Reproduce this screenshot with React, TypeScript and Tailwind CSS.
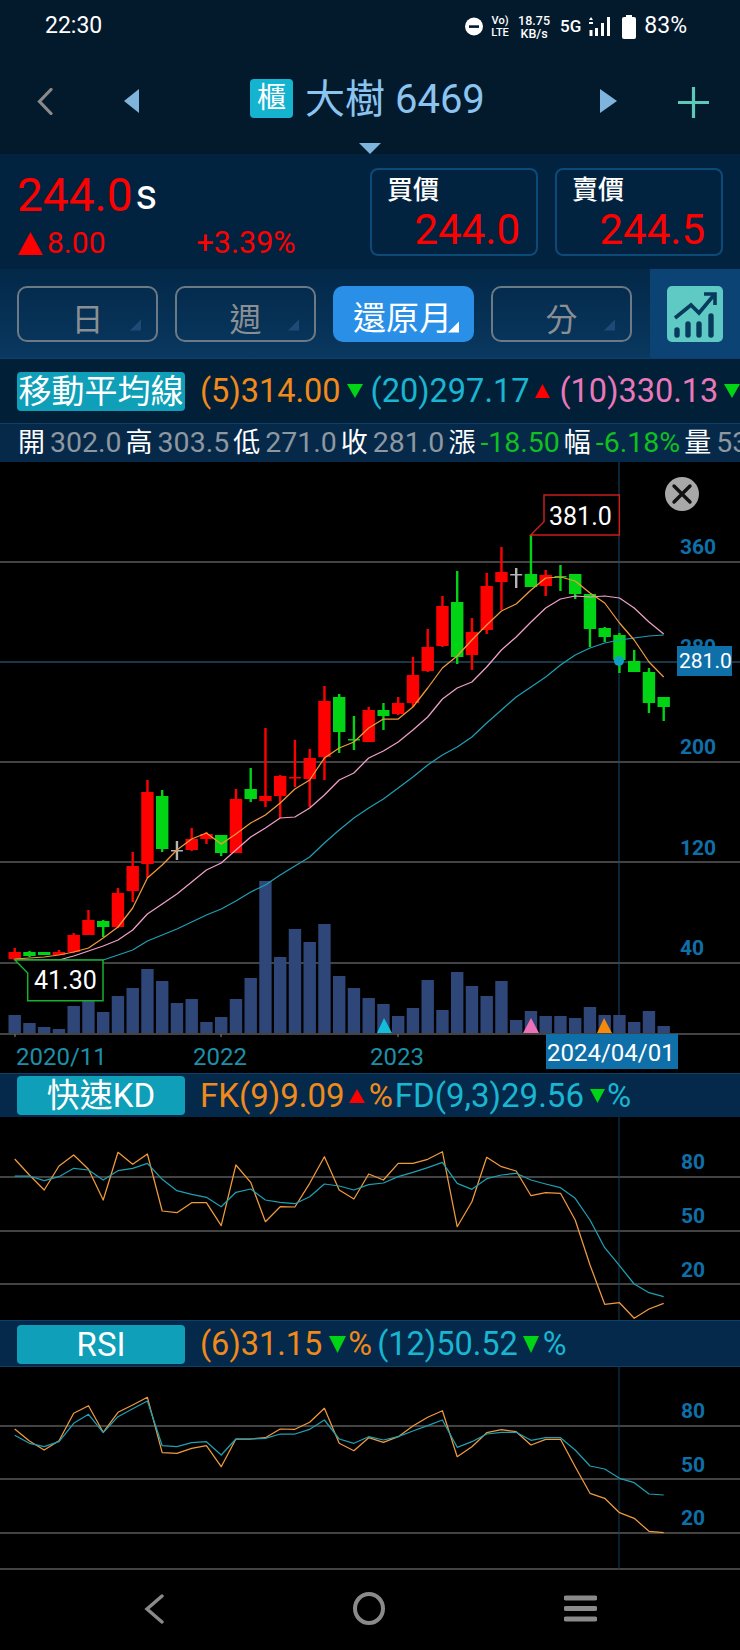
const X = (i: number) => 14.7 + 14.75 * i;

type Candle = [number, number, number, number, 'r' | 'g' | 'w', boolean?];

// wick top, body top, body bottom, wick bottom, colour, thin cross
const candles: Candle[] = [
  [948, 952, 959, 960, 'r'],
  [951, 952, 956, 957, 'g'],
  [952, 952, 955, 955, 'g'],
  [950, 952, 955, 955, 'r'],
  [933, 935, 952, 953, 'r'],
  [910, 920, 935, 935, 'r'],
  [920, 921, 927, 937, 'g'],
  [888, 893, 927, 928, 'r'],
  [852, 866, 891, 902, 'r'],
  [780, 792, 864, 878, 'r'],
  [790, 796, 849, 852, 'g'],
  [841, 850, 851, 860, 'w', true],
  [828, 839, 850, 851, 'r'],
  [832, 834, 839, 844, 'r'],
  [835, 835, 853, 856, 'g'],
  [789, 799, 853, 853, 'r'],
  [768, 789, 799, 802, 'g'],
  [728, 796, 801, 807, 'r'],
  [775, 776, 796, 818, 'r'],
  [740, 777, 778, 787, 'r', true],
  [749, 758, 779, 807, 'r'],
  [686, 701, 757, 780, 'r'],
  [694, 697, 732, 753, 'g'],
  [716, 739, 740, 750, 'g', true],
  [707, 710, 742, 742, 'r'],
  [703, 710, 716, 730, 'g', true],
  [697, 703, 714, 715, 'r'],
  [657, 675, 703, 707, 'r'],
  [629, 647, 671, 672, 'r'],
  [596, 606, 646, 647, 'r'],
  [571, 602, 657, 664, 'g'],
  [618, 632, 655, 670, 'r'],
  [573, 586, 630, 634, 'r'],
  [547, 572, 582, 610, 'r'],
  [568, 574, 575, 588, 'w', true],
  [535, 574, 587, 587, 'g'],
  [570, 575, 586, 596, 'r'],
  [565, 576, 577, 591, 'g', true],
  [574, 574, 594, 599, 'g'],
  [594, 594, 629, 647, 'g'],
  [627, 628, 637, 642, 'g'],
  [633, 635, 660, 673, 'g'],
  [650, 661, 672, 672, 'g'],
  [668, 672, 703, 713, 'g'],
  [697, 697, 707, 721, 'g'],
];

const volumes = [
  1015, 1023, 1027, 1029, 1006, 1000, 1012, 996, 988, 969, 981, 1003, 999, 1022, 1017, 999, 978, 881, 957, 929, 942, 924,
  976, 988, 998, 1004, 1016, 1008, 980, 1010, 972, 986, 996, 981, 1020, 1011, 1016, 1016, 1018, 1007, 1015, 1015, 1022,
  1011, 1026,
];

const ma5 = [
  959, 958, 957, 955, 952, 948, 938, 927, 908, 878, 865, 850, 839, 833, 844, 834, 823, 815, 803, 789, 780, 758, 748, 742,
  728, 719, 719, 707, 688, 668, 656, 640, 625, 611, 604, 590, 578, 577, 581, 593, 603, 623, 640, 662, 677,
];
const ma10 = [
  960, 960, 960, 960, 956, 951, 946, 940, 930, 914, 904, 894, 882, 870, 863, 850, 837, 828, 818, 817, 808, 795, 780, 773,
  758, 751, 742, 730, 717, 699, 688, 682, 667, 650, 637, 622, 608, 599, 596, 597, 596, 598, 608, 622, 634,
];
const ma20 = [
  960, 960, 960, 960, 960, 960, 960, 955, 950, 941, 935, 929, 922, 915, 909, 901, 892, 885, 875, 866, 857, 843, 830, 818,
  808, 799, 788, 777, 765, 755, 747, 737, 723, 710, 697, 687, 677, 665, 655, 648, 643, 640, 638, 636, 635,
];

// traced from the reference, in 3x crop rows
const fk = [
  177, 225, 270, 198, 165, 208, 300, 157, 193, 162, 333, 338, 308, 308, 377, 195, 247, 365, 320, 321, 250, 170, 270, 297,
  222, 240, 190, 190, 178, 155, 380, 305, 172, 200, 213, 287, 278, 280, 360, 495, 613, 608, 655, 627, 610,
];
const fd = [
  228, 228, 242, 230, 205, 210, 240, 212, 205, 190, 238, 272, 283, 292, 320, 277, 267, 300, 307, 311, 290, 252, 258, 270,
  254, 249, 230, 217, 203, 187, 250, 268, 236, 225, 220, 240, 252, 263, 295, 360, 443, 497, 552, 578, 590,
];
const rsi6 = [
  207, 243, 270, 242, 160, 137, 217, 157, 135, 112, 278, 280, 265, 257, 320, 237, 237, 233, 207, 208, 187, 145, 250, 272,
  233, 247, 230, 198, 172, 152, 290, 260, 218, 209, 215, 255, 238, 238, 320, 400, 415, 458, 475, 514, 518,
];
const rsi12 = [
  226, 250, 260, 245, 190, 163, 218, 170, 146, 123, 257, 260, 248, 245, 285, 237, 237, 235, 222, 222, 208, 180, 237, 250,
  230, 240, 230, 213, 197, 180, 262, 245, 222, 217, 217, 241, 233, 233, 270, 318, 327, 355, 368, 402, 405,
];

const points = (ys: number[], toY: (y: number) => number = (y) => y) =>
  ys.map((y, i) => `${X(i).toFixed(1)},${toY(y).toFixed(1)}`).join(' ');

const candleColor = { r: '#ff0000', g: '#00d414', w: '#b4b4b4' };

const Tri = ({ up, color, className }: { up?: boolean; color: string; className: string }) => (
  <svg viewBox="0 0 10 10" preserveAspectRatio="none" className={className}>
    <polygon points={up ? '5,0 10,10 0,10' : '0,0 10,0 5,10'} fill={color} />
  </svg>
);

const Line = ({ ys, color, toY }: { ys: number[]; color: string; toY?: (y: number) => number }) => (
  <polyline points={points(ys, toY)} fill="none" stroke={color} strokeWidth={1.25} strokeLinejoin="round" />
);

const Grid = ({ y, color = '#5a5a5a' }: { y: number; color?: string }) => (
  <line x1={0} x2={740} y1={y} y2={y} stroke={color} strokeWidth={1.5} />
);

const AxisLabel = ({ x, y, children }: { x: number; y: number; children: string }) => (
  <text x={x} y={y} className="fill-[#0f6fa8] text-[21px] font-bold">
    {children}
  </text>
);

const MainChart = () => (
  <svg viewBox="0 462 740 611" className="block h-[611px] w-[740px] bg-black">
    <Grid y={562} />
    <Grid y={662} color="#1f4b5e" />
    <Grid y={762} />
    <Grid y={862} />
    <Grid y={963} />
    <line x1={619} x2={619} y1={462} y2={1034} stroke="#174a6c" strokeWidth={1} />

    {volumes.map((top, i) => (
      <rect key={i} x={X(i) - 6.2} y={top} width={12.4} height={1033 - top} fill="#2f4678" />
    ))}
    <line x1={0} x2={740} y1={1034} y2={1034} stroke="#5a5a5a" strokeWidth={1.5} />
    {[15, 221, 398].map((x) => (
      <line key={x} x1={x} x2={x} y1={1034} y2={1037} stroke="#777" strokeWidth={1.2} />
    ))}
    <polygon points="384,1018 392,1033 377,1033" fill="#14bcdc" />
    <polygon points="531,1018 539,1033 523,1033" fill="#f070b8" />
    <polygon points="604,1018 612,1033 597,1033" fill="#f58a0c" />

    {candles.map(([wt, bt, bb, wb, c, thin], i) => {
      const fill = candleColor[c];
      const x = X(i);
      return (
        <g key={i}>
          <rect x={x - 1.2} y={wt} width={2.4} height={wb - wt} fill={fill} />
          {thin ? (
            <rect x={x - 6} y={bt} width={12} height={Math.max(bb - bt, 1.5)} fill={fill} />
          ) : (
            <rect x={x - 6.2} y={bt} width={12.4} height={bb - bt} fill={fill} />
          )}
        </g>
      );
    })}

    <Line ys={ma20} color="#1f9fb4" />
    <Line ys={ma10} color="#f0a0c8" />
    <Line ys={ma5} color="#f09a3e" />

    <circle cx={619} cy={661} r={5} fill="#0f9fc0" />

    <polygon
      points="530.7,535 544,521.7 544,495 619.3,495 619.3,535"
      fill="#000"
      stroke="#c81e1e"
      strokeWidth={1.5}
    />
    <text x={549} y={525} className="fill-white text-[25px]">
      381.0
    </text>
    <polygon points="15,960 103,960 103,1000.7 27.7,1000.7 27.7,973" fill="#000" stroke="#18b030" strokeWidth={1.5} />
    <text x={34} y={989} className="fill-white text-[25px]">
      41.30
    </text>

    <AxisLabel x={680} y={554}>360</AxisLabel>
    <AxisLabel x={680} y={654}>280</AxisLabel>
    <AxisLabel x={680} y={754}>200</AxisLabel>
    <AxisLabel x={680} y={855}>120</AxisLabel>
    <AxisLabel x={680} y={955}>40</AxisLabel>

    <rect x={677} y={646} width={55} height={30} fill="#0f6fa8" />
    <text x={679} y={668} className="fill-white text-[21px]">
      281.0
    </text>

    <circle cx={682} cy={494} r={17} fill="#a8a8a8" />
    <path d="M674 486 L690 502 M690 486 L674 502" stroke="#111" strokeWidth={3.4} strokeLinecap="round" />

    <text x={16} y={1065} className="fill-[#1d8fa8] text-[24px]">
      2020/11
    </text>
    <text x={193} y={1065} className="fill-[#1d8fa8] text-[24px]">
      2022
    </text>
    <text x={370} y={1065} className="fill-[#1d8fa8] text-[24px]">
      2023
    </text>
    <rect x={546} y={1034} width={132} height={35} fill="#0f6fa8" />
    <text x={547} y={1061} className="fill-white text-[24px]">
      2024/04/01
    </text>
  </svg>
);

const SubChart = ({
  top,
  height,
  grid,
  labels,
  orange,
  teal,
  crop,
}: {
  top: number;
  height: number;
  grid: number[];
  labels: [string, number][];
  orange: number[];
  teal: number[];
  crop: number;
}) => {
  const toY = (y: number) => y / 3 + crop;
  return (
    <svg viewBox={`0 ${top} 740 ${height}`} style={{ height }} className="block w-[740px] bg-black">
      {grid.map((y) => (
        <Grid key={y} y={y} />
      ))}
      <line x1={619} x2={619} y1={top} y2={top + height} stroke="#123f58" strokeWidth={1} />
      <Line ys={orange} color="#f09a3e" toY={toY} />
      <Line ys={teal} color="#1f9fb4" toY={toY} />
      {labels.map(([t, y]) => (
        <AxisLabel key={t} x={681} y={y}>
          {t}
        </AxisLabel>
      ))}
    </svg>
  );
};

const Tab = ({ label, active }: { label: string; active?: boolean }) => (
  <div
    className={
      active
        ? 'relative flex h-[56px] w-[141px] items-center justify-center rounded-[10px] bg-[#2a8fe6] pt-[9px] pr-[2px] text-[33px] leading-none text-white'
        : 'relative flex h-[56px] w-[141px] items-center justify-center rounded-[10px] border-2 border-[#6c7a86] pt-[11px] text-[32px] leading-none text-[#8a8f94]'
    }
  >
    {label}
    <svg viewBox="0 0 10 10" className="absolute right-[15px] bottom-[9px] h-[12px] w-[11px]">
      <polygon points="10,0 10,10 0,10" fill={active ? '#ffffff' : '#1f4a78'} />
    </svg>
  </div>
);

const PanelLabel = ({ children }: { children: string }) => (
  <div className="ml-[17px] flex h-[39px] w-[168px] shrink-0 items-center justify-center rounded-[4px] bg-[#0f9fb8] text-[33px] leading-none text-white">
    {children}
  </div>
);

const Ohlc = ({ label, value, color = 'text-[#8d98a0]' }: { label: string; value: string; color?: string }) => (
  <>
    <span className="mr-[5px] w-[27px] shrink-0 text-[27px] text-white">{label}</span>
    <span className={`mr-[4px] shrink-0 text-[28.5px] ${color}`}>{value}</span>
  </>
);

const Quote = ({ label, value }: { label: string; value: string }) => (
  <div className="flex h-[88px] w-[168px] flex-col rounded-[8px] border-2 border-[#0d4a78] pt-[5px] pr-[16px] pl-[15px]">
    <div className="text-[26px] leading-[30px] font-medium text-white">{label}</div>
    <div className="mt-[2px] text-right text-[42px] leading-[46px] text-[#ff0000]">{value}</div>
  </div>
);

export default function App() {
  return (
    <div
      className="h-[1650px] w-[740px] overflow-hidden bg-black"
      style={{ fontFamily: 'Roboto, "Noto Sans CJK TC", sans-serif' }}
    >
      <div className="h-[154px] bg-[#031a2d]">
        {/* status bar */}
        <div className="flex h-[53px] items-center pr-[53px] pl-[45px] text-white">
          <span className="text-[23px]">22:30</span>
          <div className="ml-auto flex items-center">
            <svg viewBox="0 0 18 18" className="h-[19px] w-[18px]">
              <circle cx={9} cy={9} r={9} fill="#fff" />
              <rect x={4} y={7.8} width={10} height={2.6} fill="#031a2d" />
            </svg>
            <div className="ml-[8px] w-[18px] text-center text-[11px] leading-[12px] font-medium">
              Vo)
              <br />
              LTE
            </div>
            <div className="ml-[8px] w-[34px] text-center text-[12.5px] leading-[13px] font-medium">
              18.75
              <br />
              KB/s
            </div>
            <span className="ml-[9px] text-[17px] font-medium">5G</span>
            <svg viewBox="0 0 21 19" className="ml-[8px] h-[19px] w-[21px]">
              <path d="M2 0 L4 3 L0 3 Z M0 5 H4 V7 H0 Z" fill="#fff" />
              <rect x={0.5} y={13} width={3} height={6} fill="#fff" />
              <rect x={6} y={11} width={3} height={8} fill="#fff" />
              <rect x={12} y={6} width={3} height={13} fill="#fff" />
              <rect x={18} y={0} width={3} height={19} fill="#fff" />
            </svg>
            <svg viewBox="0 0 14 24" className="ml-[12px] h-[24px] w-[14px]">
              <rect x={4} y={0} width={6} height={3} fill="#fff" />
              <rect x={0} y={2} width={14} height={22} rx={2} fill="#fff" />
            </svg>
            <span className="ml-[8px] text-[23px]">83%</span>
          </div>
        </div>

        {/* title row */}
        <div className="flex h-[90px] items-center pt-[6px] pl-[37px]">
          <svg viewBox="0 0 16 27" className="h-[27px] w-[16px]">
            <path d="M14 1.5 L2.5 13.5 L14 25.5" fill="none" stroke="#8a8a8a" strokeWidth={3.2} strokeLinecap="round" />
          </svg>
          <svg viewBox="0 0 15 24" className="ml-[71px] h-[24px] w-[15px]">
            <polygon points="15,0 15,24 0,12" fill="#7fb5dc" />
          </svg>
          <div className="ml-[111px] flex h-[39px] w-[43px] -translate-y-[3px] items-center justify-center rounded-[4px] bg-[#14b3d0] text-[29px] leading-none text-white">
            櫃
          </div>
          <div className="ml-[12px] w-[183px] -translate-y-[1px] text-[40px] leading-none whitespace-nowrap text-[#8cc4f0]">
            大樹 6469
          </div>
          <svg viewBox="0 0 17 24" className="ml-[112px] h-[24px] w-[17px]">
            <polygon points="0,0 0,24 17,12" fill="#7fb5dc" />
          </svg>
          <svg viewBox="0 0 31 31" className="ml-[61px] h-[31px] w-[31px] translate-y-[1px]">
            <path d="M15.5 0 V31 M0 15.5 H31" stroke="#5fc9b8" strokeWidth={3.2} />
          </svg>
        </div>
        <div className="flex justify-center">
          <Tri color="#7fb5dc" className="h-[11px] w-[22px]" />
        </div>
      </div>

      {/* quote panel */}
      <div className="flex h-[115px] bg-[#02233f]">
        <div className="w-[370px] pl-[17px]">
          <div className="flex h-[67px] items-end leading-none">
            <span className="text-[46px] leading-[52px] text-[#ff0000]">244.0</span>
            <span className="ml-[3px] text-[42px] leading-[52px] text-white">s</span>
          </div>
          <div className="mt-[5px] flex items-center text-[30px] leading-[34px] text-[#ff0000]">
            <Tri up color="#ff0000" className="ml-[1px] h-[23px] w-[25px]" />
            <span className="ml-[4px]">8.00</span>
            <span className="ml-[91px] text-[30.5px]">+3.39%</span>
          </div>
        </div>
        <div className="mt-[14px] flex gap-[17px]">
          <Quote label="買價" value="244.0" />
          <Quote label="賣價" value="244.5" />
        </div>
      </div>

      {/* period tabs */}
      <div className="flex h-[90px] border-b border-[#0e3f66] bg-gradient-to-b from-[#032848] to-[#0a3860]">
        <div className="flex flex-1 gap-[17px] pt-[17px] pl-[17px]">
          <Tab label="日" />
          <Tab label="週" />
          <Tab active label="還原月" />
          <Tab label="分" />
        </div>
        <div className="flex w-[90px] shrink-0 justify-center bg-[#0b4474] pt-[17px]">
          <svg viewBox="0 0 56 56" className="h-[56px] w-[56px]">
            <rect width={56} height={56} rx={5} fill="#5fc9c4" />
            <path d="M8 32 L24 19 L32 27 L47 9" fill="none" stroke="#083a5e" strokeWidth={3.6} />
            <path d="M37 8 H48 V19" fill="none" stroke="#083a5e" strokeWidth={3.6} />
            <path
              d="M10 44 V49 M21 38 V49 M32 38 V49 M44 30 V49"
              stroke="#083a5e"
              strokeWidth={5.4}
              strokeLinecap="round"
            />
          </svg>
        </div>
      </div>

      {/* moving averages */}
      <div className="flex h-[64px] items-center overflow-hidden whitespace-nowrap bg-[#021f38] text-[32.5px] leading-none">
        <PanelLabel>移動平均線</PanelLabel>
        <span className="ml-[15px] shrink-0 text-[#f08a1a]">(5)314.00</span>
        <Tri color="#00d414" className="ml-[6px] h-[14px] w-[16px] shrink-0" />
        <span className="ml-[8px] shrink-0 text-[#1ab5d0]">(20)297.17</span>
        <Tri up color="#ff0000" className="ml-[6px] h-[14px] w-[15px] shrink-0" />
        <span className="ml-[9px] shrink-0 text-[#e878b8]">(10)330.13</span>
        <Tri color="#00d414" className="ml-[6px] h-[14px] w-[16px] shrink-0" />
      </div>

      {/* ohlc strip */}
      <div className="flex h-[39px] items-center overflow-hidden whitespace-nowrap border-t border-[#0e3f66] bg-[#06294a] pl-[18px] leading-none">
        <Ohlc label="開" value="302.0" />
        <Ohlc label="高" value="303.5" />
        <Ohlc label="低" value="271.0" />
        <Ohlc label="收" value="281.0" />
        <Ohlc label="漲" value="-18.50" color="text-[#0fc01f]" />
        <Ohlc label="幅" value="-6.18%" color="text-[#0fc01f]" />
        <Ohlc label="量" value="53" />
      </div>

      <MainChart />

      {/* KD */}
      <div className="flex h-[44px] items-center whitespace-nowrap border-t border-[#0e3f66] bg-[#04294a] text-[33px] leading-none">
        <PanelLabel>快速KD</PanelLabel>
        <span className="ml-[15px] text-[#f08a1a]">FK(9)9.09</span>
        <Tri up color="#ff0000" className="ml-[4px] h-[14px] w-[16px]" />
        <span className="ml-[4px] text-[#f08a1a]">%</span>
        <span className="ml-[2px] text-[#1ab5d0]">FD(9,3)29.56</span>
        <Tri color="#00d414" className="ml-[6px] h-[14px] w-[15px]" />
        <span className="ml-[2px] text-[#1ab5d0]">%</span>
      </div>
      <SubChart
        top={1117}
        height={203}
        grid={[1177, 1231, 1284]}
        labels={[
          ['80', 1169],
          ['50', 1223],
          ['20', 1277],
        ]}
        orange={fk}
        teal={fd}
        crop={1100}
      />

      {/* RSI */}
      <div className="flex h-[47px] items-center whitespace-nowrap border-y border-[#0e3f66] bg-[#04294a] pt-[1px] text-[32.5px] leading-none">
        <PanelLabel>RSI</PanelLabel>
        <span className="ml-[15px] text-[#f08a1a]">(6)31.15</span>
        <Tri color="#00d414" className="ml-[7px] h-[17px] w-[17px]" />
        <span className="ml-[2px] text-[#f08a1a]">%</span>
        <span className="ml-[5px] text-[#1ab5d0]">(12)50.52</span>
        <Tri color="#00d414" className="ml-[5px] h-[17px] w-[16px]" />
        <span className="ml-[4px] text-[#1ab5d0]">%</span>
      </div>
      <SubChart
        top={1367}
        height={203}
        grid={[1426, 1479, 1533, 1569]}
        labels={[
          ['80', 1418],
          ['50', 1472],
          ['20', 1525],
        ]}
        orange={rsi6}
        teal={rsi12}
        crop={1360}
      />

      {/* android nav */}
      <div className="relative flex h-[80px] items-center justify-center pb-[3px]">
        <div className="flex items-center">
          <svg viewBox="0 0 20 30" className="h-[30px] w-[20px]">
            <path d="M18 2 L3 15 L18 28" fill="none" stroke="#8a8a8a" strokeWidth={3.4} strokeLinecap="round" />
          </svg>
          <svg viewBox="0 0 32 33" className="ml-[189px] h-[33px] w-[32px]">
            <ellipse cx={16} cy={16.5} rx={14} ry={14.5} fill="none" stroke="#8a8a8a" strokeWidth={4} />
          </svg>
          <svg viewBox="0 0 33 27" className="ml-[179px] h-[27px] w-[33px]">
            <path d="M2 3 H31 M2 13.5 H31 M2 24 H31" stroke="#8a8a8a" strokeWidth={5} strokeLinecap="round" />
          </svg>
        </div>
      </div>
    </div>
  );
}
